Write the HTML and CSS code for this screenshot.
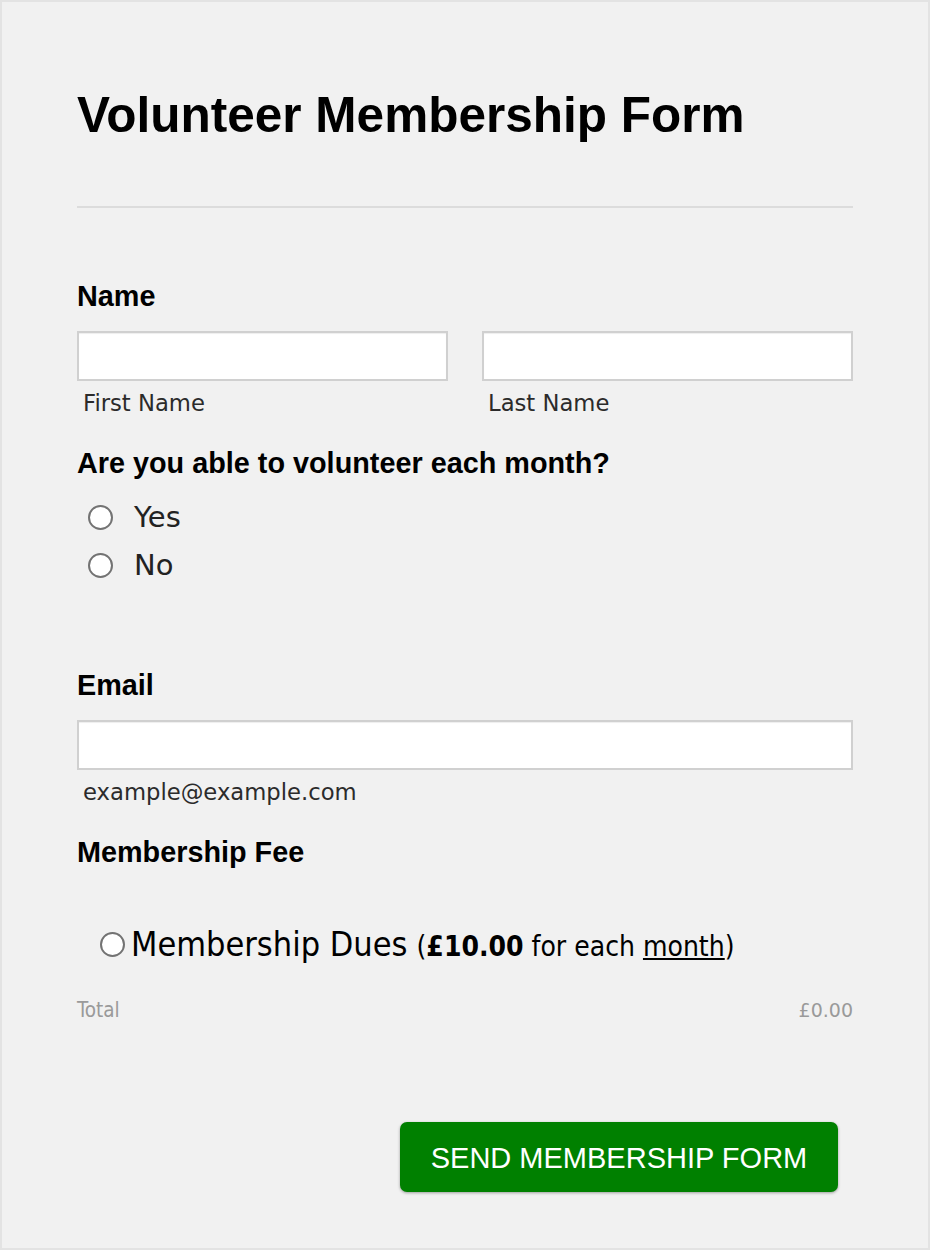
FILE: index.html
```html
<!DOCTYPE html>
<html lang="en">
<head>
  <meta charset="UTF-8">
  <meta name="viewport" content="width=device-width, initial-scale=1.0">
  <title>Volunteer Membership Form</title>
  <link rel="stylesheet" href="styles.css">
</head>
<body>
  <div class="page">
    <form class="form" onsubmit="return false;">
      <h1 class="form-title">Volunteer Membership Form</h1>
      <div class="divider"></div>

      <div class="field name-field">
        <label class="field-label" for="first-name">Name</label>
        <div class="name-row">
          <div class="sub-field">
            <input type="text" id="first-name" class="text-input" />
            <span class="sub-label">First Name</span>
          </div>
          <div class="sub-field">
            <input type="text" id="last-name" class="text-input" />
            <span class="sub-label">Last Name</span>
          </div>
        </div>
      </div>

      <div class="field question-field">
        <span class="field-label">Are you able to volunteer each month?</span>
        <div class="options">
          <label class="option">
            <input type="radio" name="monthly" class="radio" />
            <span>Yes</span>
          </label>
          <label class="option">
            <input type="radio" name="monthly" class="radio" />
            <span>No</span>
          </label>
        </div>
      </div>

      <div class="field email-field">
        <label class="field-label" for="email">Email</label>
        <input type="email" id="email" class="text-input" />
        <span class="sub-label">example@example.com</span>
      </div>

      <div class="field fee-field">
        <span class="field-label">Membership Fee</span>
        <label class="dues">
          <input type="radio" name="dues" class="radio" />
          <span class="dues-name">Membership Dues</span>
          <span class="dues-price">(<b>£10.00</b> for each <u>month</u>)</span>
        </label>
        <div class="total-row">
          <span class="total-label">Total</span>
          <span>£0.00</span>
        </div>
      </div>

      <div class="actions">
        <button type="submit" class="submit-btn">SEND MEMBERSHIP FORM</button>
      </div>
    </form>
  </div>
</body>
</html>
```

FILE: styles.css
```css
html, body {
  margin: 0;
  padding: 0;
}
body {
  font-family: "Liberation Sans", Arial, sans-serif;
  background: #f1f1f1;
}
.page {
  box-sizing: border-box;
  min-height: 1250px;
  border: 2px solid #e3e3e3;
  background: #f1f1f1;
  padding: 85px 75px 40px;
}
.form {
  display: flex;
  flex-direction: column;
}
.form-title {
  margin: 0;
  font-size: 49.5px;
  line-height: 56px;
  font-weight: bold;
  color: #000;
}
.divider {
  margin-top: 63px;
  height: 2px;
  background: #dcdcdc;
}
.field {
  display: flex;
  flex-direction: column;
}
.name-field {
  margin-top: 72px;
}
.question-field,
.fee-field {
  margin-top: 31px;
}
.email-field {
  margin-top: 80px;
}
.field-label {
  font-size: 28.8px;
  line-height: 32px;
  font-weight: bold;
  color: #000;
  margin-bottom: 19px;
}
.question-field .field-label {
  margin-bottom: 14px;
}
.name-row {
  display: grid;
  grid-template-columns: 1fr 1fr;
  gap: 34px;
}
.sub-field {
  display: flex;
  flex-direction: column;
}
.text-input {
  box-sizing: border-box;
  width: 100%;
  height: 50px;
  margin: 0;
  border: 2px solid #d0d0d0;
  background: #fff;
  box-shadow: inset 0 1px 1px #eee;
  font-size: 20px;
  padding: 0 10px;
}
.sub-label {
  margin-top: 9px;
  padding-left: 6px;
  font-family: "DejaVu Sans", sans-serif;
  font-size: 22.7px;
  line-height: 26px;
  color: #2b2b2b;
}
.options {
  display: flex;
  flex-direction: column;
}
.option {
  display: flex;
  align-items: center;
  height: 48px;
  padding-left: 11px;
  gap: 21px;
  font-family: "DejaVu Sans", sans-serif;
  font-size: 29px;
  color: #222;
}
.radio {
  appearance: none;
  -webkit-appearance: none;
  box-sizing: border-box;
  width: 25px;
  height: 25px;
  margin: 0;
  border: 2px solid #737373;
  border-radius: 50%;
  background: #fff;
  flex-shrink: 0;
}
.fee-field .field-label {
  margin-bottom: 0;
}
.dues {
  display: flex;
  align-items: center;
  margin-top: 56px;
  padding-left: 23px;
  height: 40px;
  font-family: "DejaVu Sans Condensed", "DejaVu Sans", sans-serif;
  font-stretch: condensed;
  color: #000;
}
.dues .radio {
  margin-right: 6px;
}
.dues-name {
  font-size: 34px;
  margin-right: 9px;
}
.dues-price {
  font-size: 28px;
  padding-top: 4px;
}
.total-row {
  display: flex;
  justify-content: space-between;
  margin-top: 35px;
  font-family: "DejaVu Sans", sans-serif;
  font-size: 19px;
  line-height: 22px;
  color: #9a9a9a;
}
.total-label {
  font-family: "DejaVu Sans Condensed", "DejaVu Sans", sans-serif;
  font-stretch: condensed;
  font-size: 20.5px;
}
.actions {
  display: flex;
  justify-content: flex-end;
  margin-top: 101px;
  padding-right: 15px;
}
.submit-btn {
  box-sizing: border-box;
  width: 438px;
  height: 70px;
  padding-top: 4px;
  background-color: #008000;
  color: #fff;
  border: none;
  border-radius: 7px;
  box-shadow: 0 1px 3px rgba(0, 0, 0, 0.35);
  font-family: "Liberation Sans", Arial, sans-serif;
  font-size: 29px;
  cursor: pointer;
}
.submit-btn:hover {
  background-color: #006d00;
}
```
